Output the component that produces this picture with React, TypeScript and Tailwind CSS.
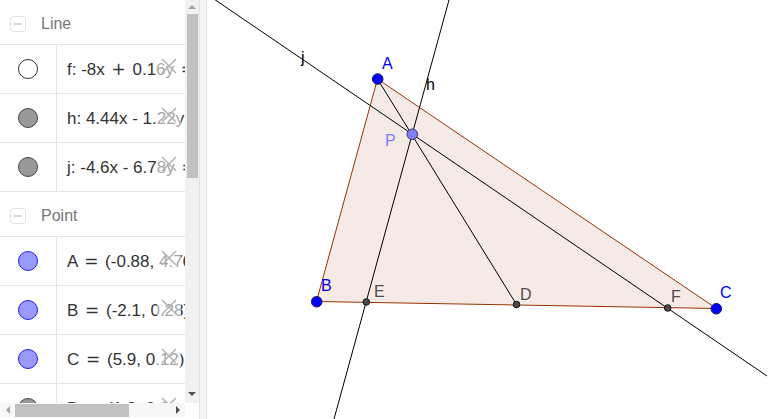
import React from 'react';

type Item = { text: string; fill: string; stroke: string };

const lines: Item[] = [
  { text: 'f: -8x + 0.16y = -15.15', fill: '#ffffff', stroke: '#333333' },
  { text: 'h: 4.44x - 1.22y = -1.7', fill: '#999999', stroke: '#444444' },
  { text: 'j: -4.6x - 6.78y = -4.83', fill: '#999999', stroke: '#444444' },
];

const points: Item[] = [
  { text: 'A = (-0.88, 4.76)', fill: '#9999ff', stroke: '#2222ee' },
  { text: 'B = (-2.1, 0.28)', fill: '#9999ff', stroke: '#2222ee' },
  { text: 'C = (5.9, 0.12)', fill: '#9999ff', stroke: '#2222ee' },
  { text: 'D = (1.9, 0.2)', fill: '#999999', stroke: '#444444' },
];

// operators are drawn wider, like the math renderer in the reference
const Formula = ({ text }: { text: string }) => {
  const parts = text.split(/([=+])/);
  return (
    <>
      {parts.map((p, i) =>
        p === '=' || p === '+' ? (
          <span key={i} className="mx-[2px]" style={{ fontFamily: "'DejaVu Sans', sans-serif" }}>
            {p}
          </span>
        ) : (
          <span key={i}>{p}</span>
        )
      )}
    </>
  );
};

const GroupHeader = ({ label }: { label: string }) => (
  <div className="flex h-[45px] shrink-0 items-center border-b border-[#e4e4e4] pt-[3px]">
    <div className="ml-[10px] flex h-[16px] w-[16px] items-center justify-center rounded-[3px] border border-[#e2e2e2]">
      <div className="h-[2px] w-[8px] bg-[#d6d6d6]" />
    </div>
    <span className="ml-[15px] text-[16px] text-[#777777]">{label}</span>
  </div>
);

const Row = ({ item }: { item: Item }) => (
  <div className="relative flex h-[49px] shrink-0 border-b border-[#e4e4e4]">
    <div className="flex w-[57px] shrink-0 items-center justify-center border-r border-[#e4e4e4]">
      <div
        className="h-[20px] w-[20px] rounded-full border"
        style={{ backgroundColor: item.fill, borderColor: item.stroke }}
      />
    </div>
    <div className="flex items-center whitespace-pre pl-[10px] pt-[2px] text-[17px] text-[#333333]">
      <Formula text={item.text} />
    </div>
    <div className="absolute left-[157px] top-[8px] flex h-[25px] w-[24px] items-center justify-center bg-white/55">
      <svg width="16" height="16" viewBox="0 0 16 16">
        <path d="M1 1 L15 15 M15 1 L1 15" stroke="#b5b5b5" strokeWidth="1.6" />
      </svg>
    </div>
  </div>
);

const Canvas = () => (
  <svg className="absolute inset-0" width="560" height="419" viewBox="208 0 560 419">
    <polygon
      points="378.5,79 317.5,301.5 717.5,308.5"
      fill="#993300"
      fillOpacity="0.1"
      stroke="#993300"
      strokeWidth="1"
    />
    <line x1="212" y1="-3" x2="768" y2="376" stroke="#000" strokeWidth="1" />
    <line x1="450" y1="0" x2="335" y2="419" stroke="#000" strokeWidth="1" />
    <line x1="378.5" y1="79" x2="517.5" y2="304.5" stroke="#000" strokeWidth="1" />

    <circle cx="367.3" cy="302" r="3.3" fill="#4d4d4d" stroke="#111" strokeWidth="1" />
    <circle cx="517.5" cy="304.5" r="3.3" fill="#4d4d4d" stroke="#111" strokeWidth="1" />
    <circle cx="668.7" cy="308" r="3.3" fill="#4d4d4d" stroke="#111" strokeWidth="1" />

    <circle cx="378.7" cy="79" r="5.3" fill="#0000ff" stroke="#1a1a4d" strokeWidth="1" />
    <circle cx="317.7" cy="301.7" r="5.3" fill="#0000ff" stroke="#1a1a4d" strokeWidth="1" />
    <circle cx="717.3" cy="308.7" r="5.3" fill="#0000ff" stroke="#1a1a4d" strokeWidth="1" />
    <circle cx="413.3" cy="134.3" r="5.3" fill="#7f7fff" stroke="#333366" strokeWidth="1" />

    <g fontFamily="'Liberation Sans', Arial, sans-serif" fontSize="16">
      <text x="383" y="69" fill="#0000ff">A</text>
      <text x="386" y="146" fill="#7f7fff">P</text>
      <text x="302" y="63" fill="#000">j</text>
      <text x="427" y="90" fill="#000">h</text>
      <text x="322" y="291" fill="#0000ff">B</text>
      <text x="375" y="297" fill="#4d4d4d">E</text>
      <text x="521" y="300" fill="#4d4d4d">D</text>
      <text x="672" y="302" fill="#4d4d4d">F</text>
      <text x="721" y="298" fill="#0000ff">C</text>
    </g>
  </svg>
);

export default function App() {
  return (
    <div
      className="flex h-[419px] w-[768px] overflow-hidden bg-white"
      style={{ fontFamily: "'Liberation Sans', Arial, sans-serif" }}
    >
      {/* Algebra view */}
      <div className="flex h-full w-[199px] shrink-0">
        <div className="flex w-[185px] shrink-0 flex-col">
          <div className="flex h-[403px] shrink-0 flex-col overflow-hidden">
            <GroupHeader label="Line" />
            {lines.map((l) => (
              <Row key={l.text} item={l} />
            ))}
            <GroupHeader label="Point" />
            {points.map((p) => (
              <Row key={p.text} item={p} />
            ))}
          </div>
          {/* horizontal scrollbar */}
          <div className="flex h-[14px] shrink-0 items-center bg-[#f7f7f7]">
            <div className="flex w-[15px] items-center justify-center">
              <div className="h-0 w-0 border-y-[4px] border-r-[4px] border-y-transparent border-r-[#a3a3a3]" />
            </div>
            <div className="h-[13px] w-[114px] bg-[#c1c1c1]" />
            <div className="flex-1" />
            <div className="flex w-[15px] items-center justify-center">
              <div className="h-0 w-0 border-y-[4px] border-l-[4px] border-y-transparent border-l-[#505050]" />
            </div>
          </div>
        </div>
        {/* vertical scrollbar */}
        <div className="flex w-[14px] shrink-0 flex-col">
          <div className="flex h-[403px] flex-col items-center bg-[#f1f1f1]">
            <div className="flex h-[14px] w-full items-center justify-center">
              <div className="h-0 w-0 border-x-[4px] border-b-[4px] border-x-transparent border-b-[#a3a3a3]" />
            </div>
            <div className="h-[164px] w-[11px] bg-[#c1c1c1]" />
            <div className="flex-1" />
            <div className="flex h-[14px] w-full items-center justify-center pb-[4px]">
              <div className="h-0 w-0 border-x-[4px] border-t-[4px] border-x-transparent border-t-[#505050]" />
            </div>
          </div>
          <div className="flex-1 bg-white" />
        </div>
      </div>

      {/* splitter */}
      <div className="h-full w-[8px] shrink-0 border-x border-[#e2e2e2] bg-[#f5f5f5]" />

      {/* graphics view */}
      <div className="relative h-full flex-1 bg-white">
        <Canvas />
      </div>
    </div>
  );
}
